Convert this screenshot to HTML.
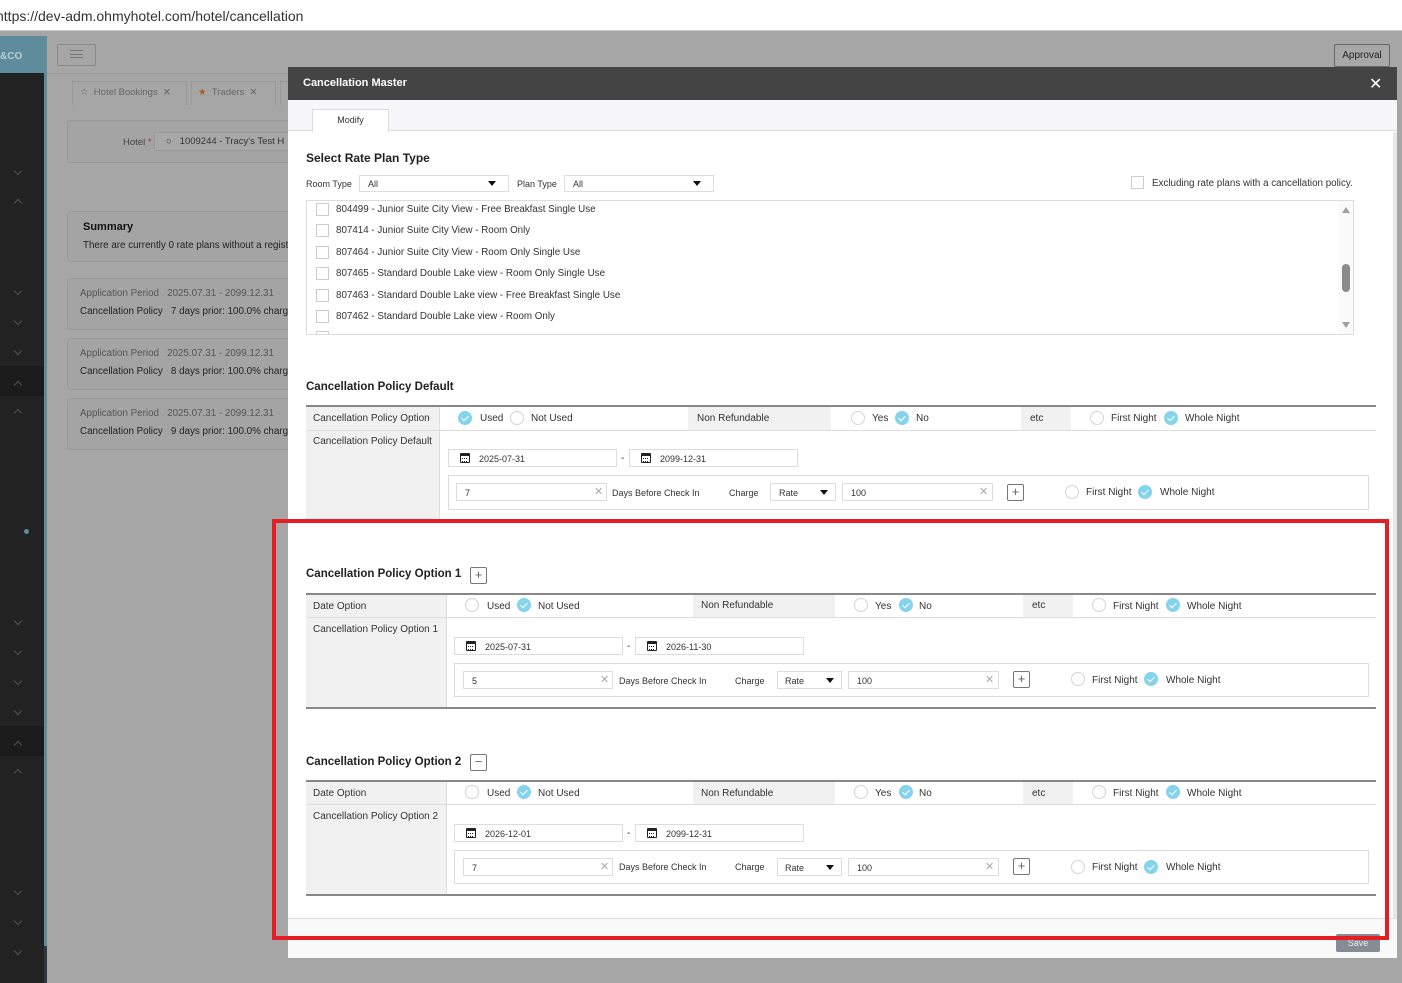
<!DOCTYPE html>
<html><head><meta charset="utf-8"><style>
*{box-sizing:border-box;margin:0;padding:0}
body{width:1402px;height:983px;position:relative;overflow:hidden;background:#a6a6a6;font-family:"Liberation Sans",sans-serif;font-size:10px;color:#333}
.a{position:absolute;white-space:nowrap}
.bx{position:absolute;border:1px solid #ddd;background:#fff}
.lb{position:absolute;background:#f1f1f1}
.r{position:absolute;width:14px;height:14px;border-radius:50%;border:1px solid #d4d4d4;background:#fff}
.r.on{background:#86d3ec;border-color:#86d3ec}
.r.on:after{content:"";position:absolute;left:4px;top:2px;width:3px;height:6px;border:solid #fff;border-width:0 1.5px 1.5px 0;transform:rotate(45deg)}
.cb{position:absolute;width:13px;height:13px;border:1px solid #ccc;background:#fff}
.x{position:absolute;color:#aaa;font-size:11px}
.tri{position:absolute;width:0;height:0;border-left:4px solid transparent;border-right:4px solid transparent;border-top:5px solid #111}
.pb{position:absolute;width:17px;height:17px;border:1px solid #777;border-radius:2px;background:#fff;color:#666;font-size:13px;line-height:14px;text-align:center}
.cal{position:absolute;width:10px;height:10px;border:1.5px solid #222;border-top-width:3px;border-radius:1px}
.cal:after{content:"";position:absolute;left:1px;top:2px;width:5px;height:2px;border-top:1px dotted #222;border-bottom:1px dotted #222}
.chev{position:absolute;left:15px;width:6px;height:6px;border:solid #555;border-width:0 1px 1px 0;transform:rotate(45deg)}
.chev.up{transform:rotate(-135deg)}
.card{position:absolute;left:67px;width:240px;border:1px solid #999;border-radius:4px;background:#a4a4a4}
.h{position:absolute;white-space:nowrap;font-size:11.5px;font-weight:bold;color:#222}
.lst .a{font-size:9.8px}
</style></head><body>
<div class="a" style="left:0;top:0;width:1402px;height:31px;background:#fff;border-bottom:1px solid #ccc"></div>
<div class="a" style="left:-4px;top:8px;font-size:14px;color:#333">https://dev-adm.ohmyhotel.com/hotel/cancellation</div>
<div class="a" style="left:0;top:36px;width:47px;height:947px;background:#222"></div>
<div class="a" style="left:0;top:36px;width:47px;height:37px;background:#5f8c9c"></div>
<div class="a" style="left:0;top:51px;color:#b8cfd6;font-weight:bold;font-size:10px">&amp;CO</div>
<div class="a" style="left:44px;top:73px;width:3px;height:873px;background:#5f8c9c"></div>
<div class="a" style="left:44px;top:946px;width:3px;height:37px;background:#2c3a3f"></div>
<div class="a" style="left:0;top:366px;width:44px;height:30px;background:#1b1b1b"></div>
<div class="a" style="left:0;top:726px;width:44px;height:30px;background:#1b1b1b"></div>
<div class="a" style="left:24px;top:529px;width:5px;height:5px;border-radius:50%;background:#5f8c9c"></div>
<div class="chev" style="top:168px"></div><div class="chev up" style="top:200px"></div>
<div class="chev" style="top:288px"></div><div class="chev" style="top:318px"></div><div class="chev" style="top:348px"></div>
<div class="chev up" style="top:382px"></div><div class="chev up" style="top:410px"></div>
<div class="chev" style="top:618px"></div><div class="chev" style="top:648px"></div><div class="chev" style="top:678px"></div><div class="chev" style="top:708px"></div>
<div class="chev up" style="top:742px"></div><div class="chev up" style="top:770px"></div>
<div class="chev" style="top:888px"></div><div class="chev" style="top:918px"></div><div class="chev" style="top:948px"></div>
<div class="a" style="left:57px;top:44px;width:39px;height:22px;border:1px solid #8a8a8a;border-radius:2px"></div>
<div class="a" style="left:70px;top:50px;width:13px;height:8px;border-top:1px solid #777;border-bottom:1px solid #777"></div>
<div class="a" style="left:70px;top:54px;width:13px;height:1px;background:#777"></div>
<div class="a" style="left:47px;top:73px;width:241px;height:1px;background:#999"></div>
<div class="a" style="left:72px;top:81px;width:115px;height:24px;border:1px solid #999;border-bottom:none"></div>
<div class="a" style="left:80px;top:87px;color:#666;font-size:9.5px">☆ &nbsp;Hotel Bookings &nbsp;✕</div>
<div class="a" style="left:191px;top:81px;width:85px;height:24px;border:1px solid #999;border-bottom:none"></div>
<div class="a" style="left:198px;top:87px;color:#666;font-size:9.5px"><span style="color:#b05a1a">★</span> &nbsp;Traders &nbsp;✕</div>
<div class="a" style="left:280px;top:81px;width:10px;height:24px;border:1px solid #999;border-bottom:none"></div>
<div class="card" style="top:120px;height:43px"></div>
<div class="a" style="left:123px;top:137px;font-size:9.5px;color:#444">Hotel <span style="color:#a33">*</span></div>
<div class="a" style="left:154px;top:132px;width:140px;height:19px;border:1px solid #999;background:#a8a8a8"></div>
<div class="a" style="left:166px;top:136px;font-size:9.5px;color:#333">○ &nbsp;&nbsp;1009244 - Tracy's Test H</div>
<div class="card" style="top:211px;height:51px"></div>
<div class="a" style="left:83px;top:221px;font-size:11px;font-weight:bold;color:#111">Summary</div>
<div class="a" style="left:83px;top:240px;font-size:9.8px;color:#222">There are currently 0 rate plans without a regist</div>
<div class="card" style="top:278px;height:52px"></div>
<div class="a" style="left:80px;top:288px;font-size:9.8px;color:#555">Application Period &nbsp;&nbsp;2025.07.31 - 2099.12.31</div>
<div class="a" style="left:80px;top:306px;font-size:9.8px;color:#222">Cancellation Policy &nbsp;&nbsp;7 days prior: 100.0% charg</div>
<div class="card" style="top:338px;height:52px"></div>
<div class="a" style="left:80px;top:348px;font-size:9.8px;color:#555">Application Period &nbsp;&nbsp;2025.07.31 - 2099.12.31</div>
<div class="a" style="left:80px;top:366px;font-size:9.8px;color:#222">Cancellation Policy &nbsp;&nbsp;8 days prior: 100.0% charg</div>
<div class="card" style="top:398px;height:52px"></div>
<div class="a" style="left:80px;top:408px;font-size:9.8px;color:#555">Application Period &nbsp;&nbsp;2025.07.31 - 2099.12.31</div>
<div class="a" style="left:80px;top:426px;font-size:9.8px;color:#222">Cancellation Policy &nbsp;&nbsp;9 days prior: 100.0% charg</div>
<div class="a" style="left:1334px;top:44px;width:56px;height:23px;border:1px solid #666;border-radius:2px;background:#a8a8a8;font-size:10px;color:#222;text-align:center;line-height:21px">Approval</div>

<div class="a" style="left:288px;top:67px;width:1109px;height:891px;background:#fff"></div>
<div class="a" style="left:288px;top:67px;width:1109px;height:33px;background:#444"></div>
<div class="a" style="left:303px;top:77px;color:#fff;font-weight:bold;font-size:11px">Cancellation Master</div>
<div class="a" style="left:1369px;top:74px;color:#fff;font-size:16px">✕</div>
<div class="a" style="left:288px;top:100px;width:1109px;height:31px;background:#f7f7f9;border-bottom:1px solid #ddd"></div>
<div class="a" style="left:312px;top:109px;width:77px;height:23px;background:#fff;border:1px solid #ddd;border-bottom:none;text-align:center;line-height:20px;font-size:9px">Modify</div>
<div class="a" style="left:1393px;top:132px;width:4px;height:786px;background:#e8e8e8"></div>

<div class="a" style="left:306px;top:151px;font-size:12px;font-weight:bold;color:#222">Select Rate Plan Type</div>
<div class="a" style="left:306px;top:179px;font-size:9px">Room Type</div>
<div class="bx" style="left:359px;top:175px;width:150px;height:17px"></div>
<div class="a" style="left:368px;top:179px;font-size:9px">All</div><div class="tri" style="left:488px;top:181px"></div>
<div class="a" style="left:517px;top:179px;font-size:9px">Plan Type</div>
<div class="bx" style="left:564px;top:175px;width:150px;height:17px"></div>
<div class="a" style="left:573px;top:179px;font-size:9px">All</div><div class="tri" style="left:693px;top:181px"></div>
<div class="cb" style="left:1131px;top:176px"></div>
<div class="a" style="left:1152px;top:178px;font-size:9.8px">Excluding rate plans with a cancellation policy.</div>
<div class="bx lst" style="left:306px;top:200px;width:1048px;height:135px;overflow:hidden">
 <div class="cb" style="left:9px;top:2px"></div><div class="a" style="left:29px;top:3px">804499 - Junior Suite City View - Free Breakfast Single Use</div>
 <div class="cb" style="left:9px;top:23px"></div><div class="a" style="left:29px;top:24px">807414 - Junior Suite City View - Room Only</div>
 <div class="cb" style="left:9px;top:45px"></div><div class="a" style="left:29px;top:46px">807464 - Junior Suite City View - Room Only Single Use</div>
 <div class="cb" style="left:9px;top:66px"></div><div class="a" style="left:29px;top:67px">807465 - Standard Double Lake view - Room Only Single Use</div>
 <div class="cb" style="left:9px;top:88px"></div><div class="a" style="left:29px;top:89px">807463 - Standard Double Lake view - Free Breakfast Single Use</div>
 <div class="cb" style="left:9px;top:109px"></div><div class="a" style="left:29px;top:110px">807462 - Standard Double Lake view - Room Only</div>
 <div class="cb" style="left:9px;top:130px"></div>
 <div class="a" style="left:1032px;top:0;width:15px;height:133px;background:#fafafa"></div>
 <div class="a" style="left:1035px;top:6px;border-left:4px solid transparent;border-right:4px solid transparent;border-bottom:6px solid #a0a0a0"></div>
 <div class="a" style="left:1035px;top:121px;border-left:4px solid transparent;border-right:4px solid transparent;border-top:6px solid #a0a0a0"></div>
 <div class="a" style="left:1035px;top:63px;width:8px;height:28px;border-radius:4px;background:#8a8a8a"></div>
</div>

<div class="h" style="left:306px;top:381px">Cancellation Policy Default</div>
<div class="a" style="left:306px;top:405px;width:1070px;height:2px;background:#888"></div>
<div class="lb" style="left:306px;top:407px;width:133px;height:113px"></div>
<div class="a" style="left:439px;top:407px;width:1px;height:113px;background:#ddd"></div>
<div class="a" style="left:306px;top:430px;width:1070px;height:1px;background:#ddd"></div>
<div class="a" style="left:313px;top:413px">Cancellation Policy Option</div>
<div class="a" style="left:313px;top:436px">Cancellation Policy Default</div>
<div class="r on" style="left:458px;top:411px"></div><div class="a" style="left:480px;top:413px">Used</div>
<div class="r" style="left:510px;top:411px"></div><div class="a" style="left:531px;top:413px">Not Used</div>
<div class="lb" style="left:688px;top:407px;width:143px;height:23px"></div><div class="a" style="left:697px;top:413px">Non Refundable</div>
<div class="r" style="left:851px;top:411px"></div><div class="a" style="left:872px;top:413px">Yes</div>
<div class="r on" style="left:895px;top:411px"></div><div class="a" style="left:916px;top:413px">No</div>
<div class="lb" style="left:1021px;top:407px;width:50px;height:23px"></div><div class="a" style="left:1030px;top:413px">etc</div>
<div class="r" style="left:1090px;top:411px"></div><div class="a" style="left:1111px;top:413px">First Night</div>
<div class="r on" style="left:1164px;top:411px"></div><div class="a" style="left:1185px;top:413px">Whole Night</div>
<div class="bx" style="left:448px;top:449px;width:169px;height:18px"></div><div class="cal" style="left:460px;top:453px"></div><div class="a" style="left:479px;top:454px;font-size:9px">2025-07-31</div>
<div class="a" style="left:621px;top:453px">-</div>
<div class="bx" style="left:629px;top:449px;width:169px;height:18px"></div><div class="cal" style="left:641px;top:453px"></div><div class="a" style="left:660px;top:454px;font-size:9px">2099-12-31</div>
<div class="bx" style="left:448px;top:475px;width:921px;height:35px"></div>
<div class="bx" style="left:456px;top:483px;width:151px;height:18px"></div><div class="a" style="left:465px;top:488px;font-size:9px">7</div><div class="x" style="left:594px;top:485px">✕</div>
<div class="a" style="left:612px;top:488px;font-size:9px">Days Before Check In</div>
<div class="a" style="left:729px;top:488px;font-size:9px">Charge</div>
<div class="bx" style="left:770px;top:483px;width:66px;height:18px"></div><div class="a" style="left:779px;top:488px;font-size:9px">Rate</div><div class="tri" style="left:820px;top:490px"></div>
<div class="bx" style="left:842px;top:483px;width:151px;height:18px"></div><div class="a" style="left:851px;top:488px;font-size:9px">100</div><div class="x" style="left:979px;top:485px">✕</div>
<div class="pb" style="left:1007px;top:484px">+</div>
<div class="r" style="left:1065px;top:485px"></div><div class="a" style="left:1086px;top:487px">First Night</div>
<div class="r on" style="left:1138px;top:485px"></div><div class="a" style="left:1160px;top:487px">Whole Night</div>

<div class="h" style="left:306px;top:568px">Cancellation Policy Option 1</div>
<div class="pb" style="left:470px;top:567px">+</div>
<div class="a" style="left:306px;top:593px;width:1070px;height:2px;background:#888"></div>
<div class="lb" style="left:306px;top:595px;width:140px;height:113px"></div>
<div class="a" style="left:446px;top:595px;width:1px;height:113px;background:#ddd"></div>
<div class="a" style="left:306px;top:617px;width:1070px;height:1px;background:#ddd"></div>
<div class="a" style="left:306px;top:707px;width:1070px;height:2px;background:#888"></div>
<div class="a" style="left:313px;top:601px">Date Option</div>
<div class="a" style="left:313px;top:624px">Cancellation Policy Option 1</div>
<div class="r" style="left:465px;top:598px"></div><div class="a" style="left:487px;top:601px">Used</div>
<div class="r on" style="left:517px;top:598px"></div><div class="a" style="left:538px;top:601px">Not Used</div>
<div class="lb" style="left:693px;top:595px;width:142px;height:22px"></div><div class="a" style="left:701px;top:600px">Non Refundable</div>
<div class="r" style="left:854px;top:598px"></div><div class="a" style="left:875px;top:601px">Yes</div>
<div class="r on" style="left:899px;top:598px"></div><div class="a" style="left:919px;top:601px">No</div>
<div class="lb" style="left:1023px;top:595px;width:50px;height:22px"></div><div class="a" style="left:1032px;top:600px">etc</div>
<div class="r" style="left:1092px;top:598px"></div><div class="a" style="left:1113px;top:601px">First Night</div>
<div class="r on" style="left:1166px;top:598px"></div><div class="a" style="left:1187px;top:601px">Whole Night</div>
<div class="bx" style="left:454px;top:637px;width:169px;height:18px"></div><div class="cal" style="left:466px;top:641px"></div><div class="a" style="left:485px;top:642px;font-size:9px">2025-07-31</div>
<div class="a" style="left:627px;top:641px">-</div>
<div class="bx" style="left:635px;top:637px;width:169px;height:18px"></div><div class="cal" style="left:647px;top:641px"></div><div class="a" style="left:666px;top:642px;font-size:9px">2026-11-30</div>
<div class="bx" style="left:454px;top:663px;width:915px;height:34px"></div>
<div class="bx" style="left:463px;top:671px;width:150px;height:18px"></div><div class="a" style="left:472px;top:676px;font-size:9px">5</div><div class="x" style="left:600px;top:673px">✕</div>
<div class="a" style="left:619px;top:676px;font-size:9px">Days Before Check In</div>
<div class="a" style="left:735px;top:676px;font-size:9px">Charge</div>
<div class="bx" style="left:777px;top:671px;width:65px;height:18px"></div><div class="a" style="left:785px;top:676px;font-size:9px">Rate</div><div class="tri" style="left:826px;top:678px"></div>
<div class="bx" style="left:848px;top:671px;width:151px;height:18px"></div><div class="a" style="left:857px;top:676px;font-size:9px">100</div><div class="x" style="left:985px;top:673px">✕</div>
<div class="pb" style="left:1013px;top:671px">+</div>
<div class="r" style="left:1071px;top:672px"></div><div class="a" style="left:1092px;top:675px">First Night</div>
<div class="r on" style="left:1144px;top:672px"></div><div class="a" style="left:1166px;top:675px">Whole Night</div>

<div class="h" style="left:306px;top:756px">Cancellation Policy Option 2</div>
<div class="pb" style="left:470px;top:754px">−</div>
<div class="a" style="left:306px;top:780px;width:1070px;height:2px;background:#888"></div>
<div class="lb" style="left:306px;top:782px;width:140px;height:113px"></div>
<div class="a" style="left:446px;top:782px;width:1px;height:113px;background:#ddd"></div>
<div class="a" style="left:306px;top:804px;width:1070px;height:1px;background:#ddd"></div>
<div class="a" style="left:306px;top:894px;width:1070px;height:2px;background:#888"></div>
<div class="a" style="left:313px;top:788px">Date Option</div>
<div class="a" style="left:313px;top:811px">Cancellation Policy Option 2</div>
<div class="r" style="left:465px;top:785px"></div><div class="a" style="left:487px;top:788px">Used</div>
<div class="r on" style="left:517px;top:785px"></div><div class="a" style="left:538px;top:788px">Not Used</div>
<div class="lb" style="left:693px;top:782px;width:142px;height:22px"></div><div class="a" style="left:701px;top:788px">Non Refundable</div>
<div class="r" style="left:854px;top:785px"></div><div class="a" style="left:875px;top:788px">Yes</div>
<div class="r on" style="left:899px;top:785px"></div><div class="a" style="left:919px;top:788px">No</div>
<div class="lb" style="left:1023px;top:782px;width:50px;height:22px"></div><div class="a" style="left:1032px;top:788px">etc</div>
<div class="r" style="left:1092px;top:785px"></div><div class="a" style="left:1113px;top:788px">First Night</div>
<div class="r on" style="left:1166px;top:785px"></div><div class="a" style="left:1187px;top:788px">Whole Night</div>
<div class="bx" style="left:454px;top:824px;width:169px;height:18px"></div><div class="cal" style="left:466px;top:828px"></div><div class="a" style="left:485px;top:829px;font-size:9px">2026-12-01</div>
<div class="a" style="left:627px;top:828px">-</div>
<div class="bx" style="left:635px;top:824px;width:169px;height:18px"></div><div class="cal" style="left:647px;top:828px"></div><div class="a" style="left:666px;top:829px;font-size:9px">2099-12-31</div>
<div class="bx" style="left:454px;top:850px;width:915px;height:34px"></div>
<div class="bx" style="left:463px;top:858px;width:150px;height:18px"></div><div class="a" style="left:472px;top:863px;font-size:9px">7</div><div class="x" style="left:600px;top:860px">✕</div>
<div class="a" style="left:619px;top:862px;font-size:9px">Days Before Check In</div>
<div class="a" style="left:735px;top:862px;font-size:9px">Charge</div>
<div class="bx" style="left:777px;top:858px;width:65px;height:18px"></div><div class="a" style="left:785px;top:863px;font-size:9px">Rate</div><div class="tri" style="left:826px;top:865px"></div>
<div class="bx" style="left:848px;top:858px;width:151px;height:18px"></div><div class="a" style="left:857px;top:863px;font-size:9px">100</div><div class="x" style="left:985px;top:860px">✕</div>
<div class="pb" style="left:1013px;top:858px">+</div>
<div class="r" style="left:1071px;top:860px"></div><div class="a" style="left:1092px;top:862px">First Night</div>
<div class="r on" style="left:1144px;top:860px"></div><div class="a" style="left:1166px;top:862px">Whole Night</div>

<div class="a" style="left:288px;top:918px;width:1109px;height:40px;background:#f9f9f9;border-top:1px solid #ddd"></div>
<div class="a" style="left:1336px;top:934px;width:44px;height:18px;background:#858c94;border-radius:2px;color:#e8eef2;font-size:9px;text-align:center;line-height:18px">Save</div>

<div class="a" style="left:272px;top:519px;width:1117px;height:421px;border:4px solid #e31e24"></div>
</body></html>
